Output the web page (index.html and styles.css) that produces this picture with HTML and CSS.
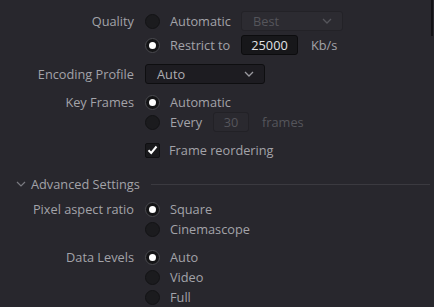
FILE: index.html
```html
<!DOCTYPE html>
<html lang="en">
<head>
    <meta charset="UTF-8">
    <meta name="viewport" content="width=device-width, initial-scale=1.0">
    <title>Render Settings</title>
    <link rel="stylesheet" href="styles.css">
</head>
<body>
    <div class="panel">
        <div class="scrollbar"></div>

        <div class="field field-quality">
            <div class="label">Quality</div>
            <div class="options">
                <div class="opt">
                    <span class="radio"></span>
                    <span class="opt-text w-quality">Automatic</span>
                    <div class="select select-best disabled">
                        <span>Best</span>
                        <svg class="chevron" width="10" height="6" viewBox="0 0 10 6"><path d="M1 1 L5 5 L9 1" fill="none" stroke="currentColor" stroke-width="1.3"/></svg>
                    </div>
                </div>
                <div class="opt">
                    <span class="radio checked"></span>
                    <span class="opt-text w-quality">Restrict to</span>
                    <div class="input input-rate">25000</div>
                    <span class="unit">Kb/s</span>
                </div>
            </div>
        </div>

        <div class="field">
            <div class="label">Encoding Profile</div>
            <div class="options">
                <div class="opt">
                    <div class="select select-profile">
                        <span>Auto</span>
                        <svg class="chevron" width="10" height="6" viewBox="0 0 10 6"><path d="M1 1 L5 5 L9 1" fill="none" stroke="currentColor" stroke-width="1.3"/></svg>
                    </div>
                </div>
            </div>
        </div>

        <div class="field">
            <div class="label">Key Frames</div>
            <div class="options">
                <div class="opt">
                    <span class="radio checked"></span>
                    <span class="opt-text">Automatic</span>
                </div>
                <div class="opt">
                    <span class="radio"></span>
                    <span class="opt-text w-every">Every</span>
                    <div class="input input-frames disabled">30</div>
                    <span class="unit disabled-text">frames</span>
                </div>
            </div>
        </div>

        <div class="field">
            <div class="label"></div>
            <div class="options">
                <div class="opt">
                    <span class="checkbox">
                        <svg width="11" height="10" viewBox="0 0 11 10"><path d="M1.5 5.2 L4.2 8 L9.5 1.5" fill="none" stroke="#fff" stroke-width="2"/></svg>
                    </span>
                    <span class="opt-text">Frame reordering</span>
                </div>
            </div>
        </div>

        <div class="section-head">
            <svg class="section-chevron" width="10" height="6" viewBox="0 0 10 6"><path d="M1 1 L5 5 L9 1" fill="none" stroke="currentColor" stroke-width="1.2"/></svg>
            <span class="section-title">Advanced Settings</span>
            <span class="section-line"></span>
        </div>

        <div class="field field-pixel">
            <div class="label">Pixel aspect ratio</div>
            <div class="options">
                <div class="opt">
                    <span class="radio checked"></span>
                    <span class="opt-text">Square</span>
                </div>
                <div class="opt">
                    <span class="radio"></span>
                    <span class="opt-text">Cinemascope</span>
                </div>
            </div>
        </div>

        <div class="field">
            <div class="label">Data Levels</div>
            <div class="options">
                <div class="opt">
                    <span class="radio checked"></span>
                    <span class="opt-text">Auto</span>
                </div>
                <div class="opt">
                    <span class="radio"></span>
                    <span class="opt-text">Video</span>
                </div>
                <div class="opt">
                    <span class="radio"></span>
                    <span class="opt-text">Full</span>
                </div>
            </div>
        </div>
    </div>
</body>
</html>
```

FILE: styles.css
```css
* {
    margin: 0;
    padding: 0;
    box-sizing: border-box;
}

body {
    font-family: 'Open Sans', 'Noto Sans', sans-serif;
    font-size: 12.75px;
    color: #a3a3a9;
    background: #28272d;
    width: 434px;
    height: 307px;
    overflow: hidden;
}

.panel {
    position: relative;
    height: 307px;
    padding-top: 11px;
}

.scrollbar {
    position: absolute;
    top: 0;
    right: 1px;
    width: 2px;
    height: 36px;
    background: #131316;
}

.field {
    display: grid;
    grid-template-columns: 134px 1fr;
    column-gap: 11px;
    margin-bottom: 8px;
}

.field-quality {
    margin-bottom: 9px;
}

.field-quality .options {
    gap: 4px;
}

.label {
    text-align: right;
    line-height: 20px;
    height: 20px;
    white-space: nowrap;
}

.options {
    display: flex;
    flex-direction: column;
}

.opt {
    display: flex;
    align-items: center;
    height: 20px;
}

.opt-text {
    line-height: 20px;
    white-space: nowrap;
}

.w-quality {
    width: 71px;
}

.w-every {
    width: 43px;
}

.radio {
    width: 15px;
    height: 15px;
    border-radius: 50%;
    background: #1b1b1e;
    border: 1px solid #131315;
    margin-right: 10px;
    display: flex;
    align-items: center;
    justify-content: center;
    flex-shrink: 0;
}

.radio.checked {
    background: #151517;
    border-color: #4a4a4f;
}

.radio.checked::after {
    content: '';
    width: 7px;
    height: 7px;
    border-radius: 50%;
    background: #fff;
}

.checkbox {
    width: 15px;
    height: 15px;
    background: #19191c;
    border: 1px solid #0f0f11;
    border-radius: 2px;
    margin-right: 9px;
    display: flex;
    align-items: center;
    justify-content: center;
}

.select {
    display: flex;
    align-items: center;
    justify-content: space-between;
    height: 20px;
    padding: 0 10px 0 11px;
    border-radius: 3px;
    background: #1d1c21;
    border: 1px solid #0e0e10;
    color: #adadb2;
}

.select .chevron {
    color: #9a9a9f;
}

.select-best {
    width: 102px;
}

.select-profile {
    width: 120px;
}

.select.disabled {
    background: #2c2b31;
    border-color: #232227;
    color: #55555b;
}

.select.disabled .chevron {
    color: #55555b;
}

.input {
    height: 20px;
    line-height: 18px;
    text-align: center;
    background: #17171a;
    border: 1px solid #0c0c0e;
    border-radius: 3px;
    color: #e2e2e6;
}

.input-rate {
    width: 57px;
}

.input-frames {
    width: 36px;
}

.input.disabled {
    background: #2a292f;
    border-color: #222126;
    color: #55555b;
}

.unit {
    margin-left: 13px;
}

.disabled-text {
    color: #55555b;
}

.section-head {
    display: flex;
    align-items: center;
    height: 20px;
    margin-top: 14px;
    margin-bottom: 5px;
    padding-left: 16px;
}

.section-chevron {
    color: #7a7a80;
    margin-right: 5px;
}

.section-title {
    white-space: nowrap;
}

.section-line {
    flex: 1;
    height: 1px;
    background: #3b3a40;
    margin-left: 11px;
    margin-right: 4px;
}
```
